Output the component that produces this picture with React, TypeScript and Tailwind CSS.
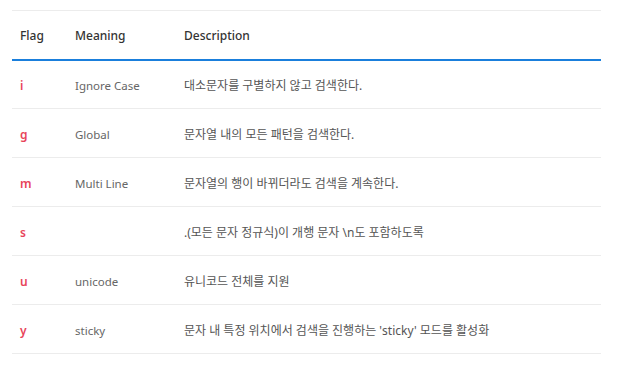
const rows = [
  { flag: "i", meaning: "Ignore Case", desc: "대소문자를 구별하지 않고 검색한다." },
  { flag: "g", meaning: "Global", desc: "문자열 내의 모든 패턴을 검색한다." },
  { flag: "m", meaning: "Multi Line", desc: "문자열의 행이 바뀌더라도 검색을 계속한다." },
  { flag: "s", meaning: "", desc: ".(모든 문자 정규식)이 개행 문자 \\n도 포함하도록" },
  { flag: "u", meaning: "unicode", desc: "유니코드 전체를 지원" },
  { flag: "y", meaning: "sticky", desc: "문자 내 특정 위치에서 검색을 진행하는 'sticky' 모드를 활성화" },
];

export default function App() {
  return (
    <div
      className="bg-white w-[617px] h-[366px] pt-[10px] pl-[12px]"
      style={{ fontFamily: '"Noto Sans", "Noto Sans CJK KR", sans-serif' }}
    >
      <table className="w-[589px] border-collapse text-left">
        <thead>
          <tr className="border-t border-[#ececec] border-b-2 border-b-[#1a7fdc] h-[49px]">
            <th className="w-[55px] pl-[8px] pt-[3px] text-[12px] font-medium text-[#333]">Flag</th>
            <th className="w-[109px] pl-[8px] pt-[3px] text-[12px] font-medium text-[#333]">Meaning</th>
            <th className="pl-[8px] pt-[3px] text-[12px] font-medium text-[#333]">Description</th>
          </tr>
        </thead>
        <tbody>
          {rows.map((r) => (
            <tr key={r.flag} className="border-b border-[#ececec] h-[49px]">
              <td className="pl-[8px] pt-[3px] text-[12px] font-semibold text-[#e8445a]">{r.flag}</td>
              <td className="pl-[8px] pt-[3px] text-[11.5px] text-[#666]">{r.meaning}</td>
              <td className="pl-[8px] pt-[3px] text-[12px] text-[#555]">{r.desc}</td>
            </tr>
          ))}
        </tbody>
      </table>
    </div>
  );
}
